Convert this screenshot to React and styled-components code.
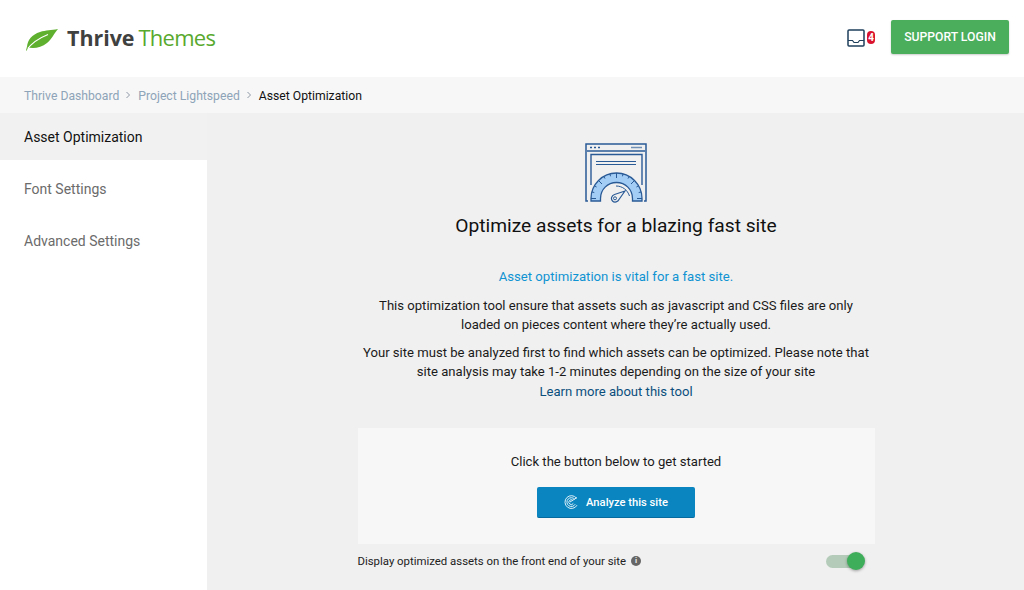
import React from "react";
import styled, { createGlobalStyle } from "styled-components";

const Global = createGlobalStyle`
  html, body {
    margin: 0;
    padding: 0;
    background: #fff;
    font-family: Roboto, "Liberation Sans", sans-serif;
  }
`;

const Page = styled.div`
  width: 1024px;
  height: 590px;
  overflow: hidden;
  display: flex;
  flex-direction: column;
`;

const Header = styled.header`
  height: 77px;
  flex: none;
  display: flex;
  align-items: center;
  justify-content: space-between;
  padding: 0 15px 3px 25px;
  box-sizing: border-box;
  background: #fff;
`;

const Logo = styled.div`
  display: flex;
  align-items: center;
  gap: 8px;
  margin-top: 2px;
  font-family: "Open Sans", sans-serif;
  line-height: 30px;
`;

const LeafMark = styled.svg`
  margin-top: 3px;
`;

const LogoDark = styled.span`
  font-size: 21.4px;
  font-weight: 700;
  color: #3f4040;
  margin-right: 4px;
`;

const LogoGreen = styled.span`
  font-size: 22px;
  letter-spacing: -0.75px;
  font-weight: 400;
  color: #58a92e;
`;

const HeaderRight = styled.div`
  display: flex;
  align-items: center;
  gap: 16px;
`;

const Inbox = styled.div`
  display: flex;
  align-items: center;
  gap: 2px;
  margin-top: 1px;
`;

const Badge = styled.span`
  width: 8px;
  height: 13px;
  border-radius: 4px;
  background: #d9132e;
  color: #fff;
  font-size: 10px;
  font-weight: 700;
  line-height: 13px;
  text-align: center;
`;

const Support = styled.button`
  width: 118px;
  height: 34px;
  border: 0;
  border-radius: 2px;
  background: #4bae5c;
  box-shadow: 0 1px 2px rgba(0, 0, 0, 0.2);
  color: #fff;
  font-family: inherit;
  font-size: 12.2px;
  font-weight: 500;
  padding: 0;
`;

const Crumbs = styled.nav`
  height: 36px;
  flex: none;
  display: flex;
  align-items: center;
  padding: 1px 0 0 24px;
  box-sizing: border-box;
  background: #f7f7f7;
  font-size: 12.2px;
`;

const Crumb = styled.span`
  color: ${props => (props.current ? "#111" : "#8ea4b8")};
`;

const Sep = styled.svg`
  width: 6px;
  height: 8px;
  margin: 0 7px 2px 6px;
`;

const Body = styled.div`
  flex: 1;
  display: flex;
  min-height: 0;
`;

const Sidebar = styled.aside`
  width: 207px;
  flex: none;
  background: #fff;
`;

const SideList = styled.div`
  padding-top: 3px;
`;

const SideItem = styled.div`
  height: ${props => (props.active ? "47px" : "52px")};
  display: flex;
  align-items: center;
  padding-left: 24px;
  font-size: 14px;
  color: ${props => (props.active ? "#111" : "#6b6b6b")};
  background: ${props => (props.active ? "#f1f1f1" : "#fff")};
`;

const Main = styled.main`
  flex: 1;
  background: #f0f0f0;
  display: flex;
  flex-direction: column;
  align-items: center;
  padding: 30px 0 0 1px;
  box-sizing: border-box;
`;

const Column = styled.div`
  width: 517px;
  display: flex;
  flex-direction: column;
  align-items: center;
  text-align: center;
`;

const Title = styled.h1`
  margin: 10px 0 0;
  font-size: 19.2px;
  line-height: 26px;
  font-weight: 400;
  color: #111;
`;

const Lead = styled.p`
  margin: 28px 0 0;
  font-size: 13.15px;
  line-height: 19px;
  color: #0f93d2;
`;

const Para = styled.p`
  margin: ${props => props.gap}px 0 0;
  width: ${props => props.width}px;
  font-size: 13.1px;
  line-height: 19.4px;
  color: #1a1a1a;
`;

const LearnMore = styled.a`
  display: block;
  color: #0b4f7d;
`;

const StartCard = styled.section`
  width: 517px;
  height: 116px;
  margin-top: 27px;
  background: #f7f7f7;
  display: flex;
  flex-direction: column;
  align-items: center;
  box-sizing: border-box;
  padding-top: 25px;
`;

const StartText = styled.div`
  font-size: 13.1px;
  line-height: 18px;
  color: #1a1a1a;
`;

const Analyze = styled.button`
  margin-top: 16px;
  width: 158px;
  height: 31px;
  border: 0;
  border-bottom: 1px solid #066a9e;
  border-radius: 2px;
  background: #0a85bf;
  color: #fff;
  font-family: inherit;
  font-size: 11.2px;
  font-weight: 500;
  display: flex;
  align-items: center;
  justify-content: center;
  gap: 8px;
  padding: 0;
`;

const DisplayRow = styled.div`
  width: 517px;
  height: 34px;
  display: flex;
  align-items: center;
  font-size: 11.4px;
  color: #222;
`;

const InfoDot = styled.span`
  width: 10px;
  height: 10px;
  margin-left: 5px;
  border-radius: 50%;
  background: #666;
  color: #f0f0f0;
  font-size: 8px;
  font-weight: 700;
  line-height: 10px;
  text-align: center;
`;

const Toggle = styled.div`
  position: relative;
  width: 30px;
  height: 13px;
  margin-left: auto;
  margin-right: 19px;
  border-radius: 7px;
  background: #b3cbb8;
`;

const Knob = styled.span`
  position: absolute;
  top: -2.5px;
  right: -9px;
  width: 18px;
  height: 18px;
  border-radius: 50%;
  background: #3fae5a;
  box-shadow: 0 1px 3px rgba(0, 0, 0, 0.35);
`;

function Leaf() {
  return (
    <LeafMark width="34" height="23" viewBox="0 0 34 23">
      <path d="M33 1C26 2.5 21 2 15 4C7 6.5 2.5 12 2 19C7.5 21 16 20 22 15C27 11 29 5.5 33 1Z" fill="#5fb02f" />
      <path d="M1.2 22.5C6 15.5 13 10.5 23 6.5" stroke="#fff" strokeWidth="1.2" fill="none" />
      <path d="M1 22.5L2 18.5L3 19.5L1.6 22.7Z" fill="#5fb02f" />
    </LeafMark>
  );
}

function InboxIcon() {
  return (
    <svg width="18" height="18" viewBox="0 0 18 18" fill="none">
      <rect x="1" y="1" width="16" height="16" rx="1" stroke="#1f3f5c" strokeWidth="1.5" />
      <path d="M1 11.5H5.5L7 13.5H11L12.5 11.5H17" stroke="#1f3f5c" strokeWidth="1.2" />
    </svg>
  );
}

function Chevron() {
  return (
    <Sep viewBox="0 0 6 8" fill="none">
      <path d="M1.5 1L4.5 4L1.5 7" stroke="#8d99a5" strokeWidth="1" />
    </Sep>
  );
}

function SpeedIcon() {
  const ticks = [];
  for (let i = 0; i <= 12; i++) {
    const a = Math.PI - (i * Math.PI) / 12;
    const c = Math.cos(a);
    const s = Math.sin(a);
    const inner = i % 3 ? 23 : 20.5;
    ticks.push(
      <line key={i} x1={31.5 + 25.5 * c} y1={55.5 - 25.5 * s} x2={31.5 + inner * c} y2={55.5 - inner * s} stroke="#2a5a96" strokeWidth="1" />
    );
  }
  return (
    <svg width="62" height="60" viewBox="0 0 62 60" fill="none">
      <path d="M3 58H1V1H61V58H59" stroke="#2a5a96" strokeWidth="1.5" />
      <path d="M2 8H60" stroke="#2a5a96" strokeWidth="1.3" />
      <path d="M5 4.5H7M9 4.5H11M13 4.5H15" stroke="#2a5a96" strokeWidth="1.5" />
      <path d="M46 4.5H57" stroke="#6f8fb5" strokeWidth="1.5" />
      <path d="M6 42V11.5H57V42" stroke="#2a5a96" strokeWidth="1.4" />
      <path d="M11 18.5H51M11 21.5H51" stroke="#2a5a96" strokeWidth="1.2" />
      <path d="M6 58V55.5C6 41.5 17.5 30 31.5 30C45.5 30 57 41.5 57 55.5V58H47.5V55.5C47.5 46.5 40.5 39.5 31.5 39.5C22.5 39.5 15.5 46.5 15.5 55.5V58Z" fill="#a3cdf5" stroke="#2a5a96" strokeWidth="1.3" />
      {ticks}
      <path d="M31 43C37.5 43 42.5 47 44.5 53" stroke="#2a5a96" strokeWidth="1" />
      <path d="M40 48L29.5 51.5C26.5 52.5 25.5 56 27.5 58C29.5 60 33 59 34 56.5Z" fill="#f0f0f0" stroke="#2a5a96" strokeWidth="1.2" />
      <circle cx="30" cy="55.3" r="1.5" stroke="#2a5a96" />
    </svg>
  );
}

function AnalyzeIcon() {
  return (
    <svg width="14" height="14" viewBox="0 0 14 14" fill="none" stroke="#dff0f9" strokeWidth="1">
      <path d="M12.5 3.2A6.4 6.4 0 1 0 13 10.2" />
      <path d="M10.8 4.4A4.4 4.4 0 1 0 11.2 9.2" />
      <path d="M9 5.5A2.4 2.4 0 1 0 9.3 8.4" />
      <path d="M6 7L13 2.5" />
    </svg>
  );
}

export default function App() {
  return (
    <Page>
      <Global />
      <Header>
        <Logo>
          <Leaf />
          <span>
            <LogoDark>Thrive</LogoDark>
            <LogoGreen>Themes</LogoGreen>
          </span>
        </Logo>
        <HeaderRight>
          <Inbox>
            <InboxIcon />
            <Badge>4</Badge>
          </Inbox>
          <Support>SUPPORT LOGIN</Support>
        </HeaderRight>
      </Header>
      <Crumbs>
        <Crumb>Thrive Dashboard</Crumb>
        <Chevron />
        <Crumb>Project Lightspeed</Crumb>
        <Chevron />
        <Crumb current>Asset Optimization</Crumb>
      </Crumbs>
      <Body>
        <Sidebar>
          <SideItem active>Asset Optimization</SideItem>
          <SideList>
            <SideItem>Font Settings</SideItem>
            <SideItem>Advanced Settings</SideItem>
          </SideList>
        </Sidebar>
        <Main>
          <Column>
            <SpeedIcon />
            <Title>Optimize assets for a blazing fast site</Title>
            <Lead>Asset optimization is vital for a fast site.</Lead>
            <Para gap={10} width={490}>
              This optimization tool ensure that assets such as javascript and CSS files are only
              loaded on pieces content where they’re actually used.
            </Para>
            <Para gap={8} width={517}>
              Your site must be analyzed first to find which assets can be optimized. Please note that
              site analysis may take 1-2 minutes depending on the size of your site
              <LearnMore>Learn more about this tool</LearnMore>
            </Para>
            <StartCard>
              <StartText>Click the button below to get started</StartText>
              <Analyze>
                <AnalyzeIcon />
                Analyze this site
              </Analyze>
            </StartCard>
            <DisplayRow>
              Display optimized assets on the front end of your site
              <InfoDot>i</InfoDot>
              <Toggle>
                <Knob />
              </Toggle>
            </DisplayRow>
          </Column>
        </Main>
      </Body>
    </Page>
  );
}
